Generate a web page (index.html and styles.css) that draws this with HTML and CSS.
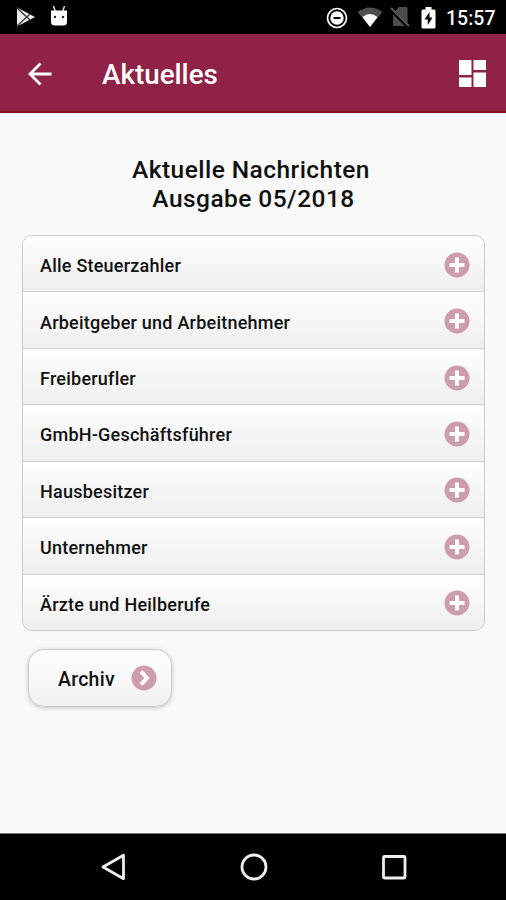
FILE: index.html
```html
<!DOCTYPE html>
<html lang="de">
<head>
<meta charset="utf-8">
<title>Aktuelles</title>
<link rel="stylesheet" href="styles.css">
</head>
<body>
<svg width="0" height="0" class="defs">
  <symbol id="plus" viewBox="0 0 26 26"><circle cx="13" cy="13" r="12.5" fill="#cd9dae"/><path d="M13 5.5v15M5.5 13h15" stroke="#fff" stroke-width="4"/></symbol>
</svg>
<div class="status">
  <svg class="play" width="20" height="20" viewBox="0 0 20 20"><path d="M1 .5v19L19 10z" fill="#eee"/><path d="M1 1l13 12M1 19L14 7" stroke="#333" stroke-width="1.3"/></svg>
  <svg class="robot" width="18" height="20" viewBox="0 0 18 20"><path d="M3.500 0l1.700 5M14.500 0l-1.700 5" stroke="#ddd" stroke-width="1.500"/><path d="M1 4.500h16V16q0 3.500-4 3.500H5q-4 0-4-3.500z" fill="#fff"/><circle cx="5" cy="11" r="1.200" fill="#222"/><circle cx="13" cy="11" r="1.200" fill="#222"/></svg>
  <svg class="dnd" width="22" height="22" viewBox="0 0 22 22"><circle cx="11" cy="11" r="9.500" fill="none" stroke="#fff" stroke-width="1.700"/><circle cx="11" cy="11" r="6.700" fill="#fff"/><path d="M7.500 11h7" stroke="#000" stroke-width="2"/></svg>
  <svg class="wifi" width="26" height="20" viewBox="0 0 26 20"><path d="M.5 5Q13-4 25.500 5L13 20z" fill="#4d4d4d"/><path d="M5.500 10Q13 4 20.500 10L13 20z" fill="#fff"/></svg>
  <svg class="sim" width="20" height="22" viewBox="0 0 20 22"><path d="M3 7l6-6h7q1.500 0 1.500 1.500V20H3z" fill="#4d4d4d"/><path d="M.5 3L18.500 21" stroke="#000" stroke-width="4"/><path d="M1 2L19 20" stroke="#5a5a5a" stroke-width="2"/></svg>
  <svg class="battery" width="15" height="22" viewBox="0 0 15 22"><path d="M4.500 0h6v2.500H13q1.500 0 1.500 1.500v16q0 1.500-1.500 1.500H2Q.5 21.500.5 20V4Q.5 2.500 2 2.500h2.500z" fill="#fff"/><path d="M8.500 5l-5 7.500h3.300V18l4.700-7.500H8.500z" fill="#000"/></svg>
  <span class="time">15:57</span>
</div>
<header class="bar">
  <svg class="back" width="24" height="24" viewBox="0 0 24 24"><path d="M12.500 1.500L2 12l10.500 10.500M2.500 12H23.500" fill="none" stroke="#fff" stroke-width="2.800"/></svg>
  <h1 class="title">Aktuelles</h1>
  <svg class="dash" width="27" height="27" viewBox="0 0 27 27"><path d="M0 0h12.500v15H0zM14.500 0H27v10H14.500zM0 17.500h12.500V27H0zM14.500 12.500H27V27H14.500z" fill="#fff"/></svg>
</header>
<main class="content">
  <h2 class="heading">Aktuelle Nachrichten<br><span class="issue">Ausgabe 05/2018</span></h2>
  <ul class="list">
    <li class="row"><span>Alle Steuerzahler</span><svg class="icon"><use href="#plus"/></svg></li>
    <li class="row"><span>Arbeitgeber und Arbeitnehmer</span><svg class="icon"><use href="#plus"/></svg></li>
    <li class="row"><span>Freiberufler</span><svg class="icon"><use href="#plus"/></svg></li>
    <li class="row"><span>GmbH-Geschäftsführer</span><svg class="icon"><use href="#plus"/></svg></li>
    <li class="row"><span>Hausbesitzer</span><svg class="icon"><use href="#plus"/></svg></li>
    <li class="row"><span>Unternehmer</span><svg class="icon"><use href="#plus"/></svg></li>
    <li class="row"><span>Ärzte und Heilberufe</span><svg class="icon"><use href="#plus"/></svg></li>
  </ul>
  <button class="archive"><span>Archiv</span><svg class="icon" viewBox="0 0 26 26"><circle cx="13" cy="13" r="12.500" fill="#cd9dae"/><path d="M10 6.500l6 6.500-6 6.500" fill="none" stroke="#fff" stroke-width="4"/></svg></button>
</main>
<nav class="nav">
  <svg width="28" height="30" viewBox="0 0 28 30"><path d="M24.500 3.300v23.400L4 15z" fill="none" stroke="#eee" stroke-width="2.800" stroke-linejoin="round"/></svg>
  <svg width="28" height="30" viewBox="0 0 28 30"><circle cx="14" cy="15" r="12" fill="none" stroke="#eee" stroke-width="2.800"/></svg>
  <svg width="28" height="30" viewBox="0 0 28 30"><rect x="3.500" y="4.500" width="21.500" height="21.500" rx="1" fill="none" stroke="#eee" stroke-width="2.800"/></svg>
</nav>
</body>
</html>
```
FILE: styles.css
```css
* { box-sizing: border-box; }
body {
  margin: 0;
  width: 506px;
  height: 900px;
  display: flex;
  flex-direction: column;
  overflow: hidden;
  background: #f9f9f9;
  color: #111;
  font-family: Roboto, "Liberation Sans", sans-serif;
  font-weight: 500;
}
svg { display: block; flex: none; }
.defs { display: none; }
.status {
  height: 34px;
  flex: none;
  display: flex;
  align-items: center;
  padding: 0 11px 0 16px;
  background: #000;
}
.robot { margin-left: 14px; margin-top: -2px; }
.dnd { margin-left: auto; margin-top: 1px; }
.wifi { margin-left: 9px; }
.sim { margin-left: 7px; }
.battery { margin-left: 11px; margin-top: 1px; }
.time { margin-left: 10px; width: 49px; color: #f4f4f4; font-size: 19.5px; line-height: 34px; padding-top: 3px; white-space: nowrap; }
.bar {
  height: 79px;
  flex: none;
  display: flex;
  align-items: center;
  padding: 2px 20px 0 28px;
  background: #8f2246;
  border-bottom: 2px solid #7f1123;
}
.title { margin: 2px 0 0 50px; color: #fff; font-size: 27.8px; font-weight: 500; line-height: 32px; }
.dash { margin-left: auto; }
.content { flex: 1; padding: 42px 21px 0 22px; }
.heading { margin: 0 5px 0 0; text-align: center; font-size: 24.5px; letter-spacing: .45px; font-weight: 500; line-height: 29px; }
.issue { padding-left: 5px; }
.list {
  height: 396px;
  margin: 22px 0 0;
  padding: 0;
  list-style: none;
  display: flex;
  flex-direction: column;
  border: 1.5px solid #ccc;
  border-radius: 10px;
  overflow: hidden;
}
.row {
  flex: 1;
  display: flex;
  align-items: center;
  justify-content: space-between;
  padding: 4px 14px 0 17px;
  font-size: 18px;
  letter-spacing: .23px;
  background: linear-gradient(#fff, #eee);
}
.row + .row { border-top: 1.5px solid #d0d0d0; }
.icon { width: 26px; height: 26px; }
.row .icon { margin-top: -2px; }
.archive {
  width: 144px;
  height: 58px;
  margin: 18px 0 0 6px;
  padding: 0 14px 0 29px;
  display: flex;
  align-items: center;
  justify-content: space-between;
  font: 500 19.5px Roboto, "Liberation Sans", sans-serif;
  letter-spacing: .25px;
  color: #111;
  border: 1.5px solid #ccc;
  border-radius: 16px;
  background: linear-gradient(#fff, #f1f1f1);
  box-shadow: 0 1px 4px rgba(0, 0, 0, .22);
}
.archive span { padding-top: 3px; }
.nav {
  height: 67px;
  flex: none;
  display: flex;
  align-items: center;
  justify-content: space-between;
  padding: 0 98px 0 99px;
  border-top: 1px solid #777;
  background: #000;
}
```
